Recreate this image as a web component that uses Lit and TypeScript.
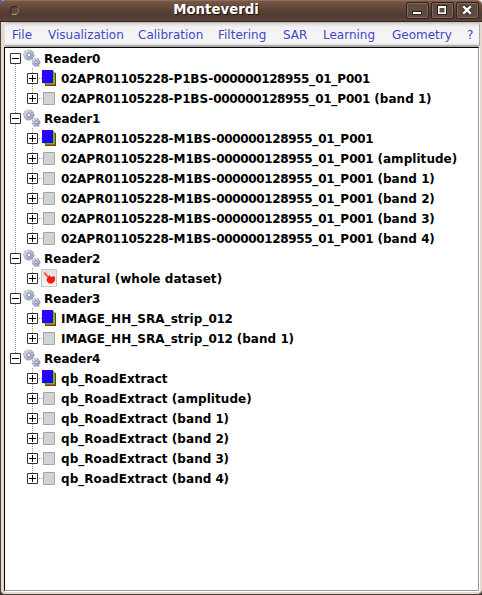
import { LitElement, html, svg, css } from "lit";
import { customElement, property } from "lit/decorators.js";

type Kind = "rgb" | "band" | "view";
interface Leaf { name: string; kind: Kind; }
interface Reader { name: string; items: Leaf[]; }

const product = (name: string, bands: string[]): Leaf[] => [
  { name, kind: "rgb" },
  ...bands.map((b) => ({ name: `${name} (${b})`, kind: "band" as Kind })),
];
const allBands = ["amplitude", "band 1", "band 2", "band 3", "band 4"];

const readers: Reader[] = [
  { name: "Reader0", items: product("02APR01105228-P1BS-000000128955_01_P001", ["band 1"]) },
  { name: "Reader1", items: product("02APR01105228-M1BS-000000128955_01_P001", allBands) },
  { name: "Reader2", items: [{ name: "natural (whole dataset)", kind: "view" }] },
  { name: "Reader3", items: product("IMAGE_HH_SRA_strip_012", ["band 1"]) },
  { name: "Reader4", items: product("qb_RoadExtract", allBands) },
];

// Digits are set slightly tighter than letters.
const tightDigits = (text: string) =>
  text.split(/(\d+)/).map((part) => (/^\d/.test(part) ? html`<span class="num">${part}</span>` : part));

const gear = (cx: number, cy: number, r: number) => svg`
  <circle cx=${cx} cy=${cy} r=${r} fill="none" stroke="#9298ad" stroke-width="1.4" stroke-dasharray="2 .9"/>
  <circle cx=${cx} cy=${cy} r=${r * 0.72} fill="none" stroke="url(#steel)" stroke-width=${r * 0.6}/>
  <circle cx=${cx} cy=${cy} r=${r * 0.38} fill="#fff" stroke="#747b94" stroke-width=".9"/>`;

@customElement("tree-icon")
class TreeIcon extends LitElement {
  @property() kind = "gear";
  static styles = css`:host { display: block; } svg { display: block; overflow: visible; }`;
  render() {
    if (this.kind === "gear")
      return html`<svg width="19" height="20" viewBox="0 0 19 20">
        <defs>
          <linearGradient id="steel" x1="0" y1="0" x2="1" y2="1"><stop offset="0" stop-color="#d0d5ea"/><stop offset="1" stop-color="#969db9"/></linearGradient>
        </defs>
        <ellipse cx="13.6" cy="18" rx="4" ry="1" fill="#000" opacity=".15"/>
        ${gear(5.9, 7, 4.9)}${gear(13.1, 14.3, 3.6)}
      </svg>`;
    if (this.kind === "rgb")
      return html`<svg width="16" height="20" viewBox="0 0 16 20" shape-rendering="crispEdges">
        <path d="M3 5h11v13H3z" fill="#b8200c"/>
        <path d="M11 3h1v1h1v12H2v-1h9z" fill="#3fd012"/>
        <path d="M3 16h10v1H3z" fill="#5f8a10"/>
        <path d="M0 2h11v13H0z" fill="#2a00ff"/>
      </svg>`;
    if (this.kind === "view")
      return html`<svg width="16" height="20" viewBox="1 0 16 20">
        <defs><linearGradient id="p" x1="0" y1="0" x2="0" y2="1"><stop offset="0" stop-color="#e0e0e0"/><stop offset="1" stop-color="#f5f5f5"/></linearGradient></defs>
        <path d="M.5 1.5h15v17H.5z" fill="url(#p)" stroke="#c9c4c4"/>
        <path d="M2.3 5L4.4 4l3.8 4.6-1.4 2z" fill="#e98078"/>
        <path d="M3 5l4.5 4.2" stroke="#ee5448" stroke-width="1.1"/>
        <path d="M5.6 11L7.6 8.6 8.6 7l1.6 2.2 2.2-1.2 1.8 1.6-.4 3.4-2.5 2.6-3.2-.1-2.2-2.2z" fill="#fa1611"/>
      </svg>`;
    return html`<svg width="16" height="20" viewBox="0 0 16 20"><path d="M1.5 4.5h11v12h-11z" fill="#d3d3d3" stroke="#a4a4a4"/></svg>`;
  }
}

@customElement("tree-toggle")
class TreeToggle extends LitElement {
  @property({ type: Boolean }) open = false;
  static styles = css`:host { display: block; } svg { display: block; }`;
  render() {
    return html`<svg width="11" height="11" viewBox="0 0 11 11">
      <path d="M.5 .5h10v10H.5z" fill="#fff" stroke="#333"/>
      <path d=${this.open ? "M2 5.5h7" : "M2 5.5h7M5.5 2v7"} stroke="#000"/>
    </svg>`;
  }
}

@customElement("app-root")
class AppRoot extends LitElement {
  static styles = css`
    :host { display: block; height: 595px; font-family: "DejaVu Sans", sans-serif; font-size: 12px; }
    .window { box-sizing: border-box; width: 482px; height: 595px; display: flex; flex-direction: column; overflow: hidden;
      background: linear-gradient(90deg, #3564c8 2px, #e8e8e8 2px) 0 0 / 100% 6px no-repeat #3b332e; }
    .title { height: 22px; flex: none; box-sizing: border-box; display: grid; grid-template-columns: 88px 1fr 88px; align-items: center;
      border-top: 1px solid #8e6c59; border-bottom: 1px solid #35251e; border-radius: 5px 5px 0 0;
      background: linear-gradient(#76594a, #66493b 30%, #513b31 65%, #59443a); }
    .dot { width: 7px; height: 7px; margin-left: 10px; margin-bottom: 2px; border: 1px solid #2e211b; border-bottom-color: #aa9a91; border-right-color: #8f7f76; border-radius: 50%; background: #65483a; }
    .name { margin-right: 50px; text-align: center; color: #fff; font-weight: bold; font-size: 13.33px; line-height: 16px; text-shadow: 1px 1px 1px #1c120d; padding-bottom: 3px; }
    .buttons { display: flex; gap: 2px; justify-content: flex-end; padding: 0 3px 0 0; }
    .buttons svg { display: block; }
    .frame { flex: 1; display: flex; flex-direction: column; min-height: 0; padding: 0 2px 2px 3px; border: solid #4b4038; border-width: 0 0 1px 1px;
      background: #e4dad2; border-radius: 0 0 5px 5px; }
    .menu { height: 25px; flex: none; box-sizing: border-box; display: grid; grid-template-columns: 36px 90px 80px 65px 40px 69px 75px 1fr; padding-left: 7px;
      border: solid #aaa; border-width: 0 1px 2px 1px; border-left-color: #ddd;
      background: linear-gradient(#b8b8b8, #dedede 2px, #f2f2f2 5px, #f6f6f6 20px, #e6e6e6); color: #4545c4; line-height: 26px; border-radius: 3px; }
    .menu span { white-space: nowrap; }
    .view { flex: 1; min-height: 0; background: #fff; border: solid #000; border-width: 1px 0 0 1px; border-right: 1px solid #999; border-bottom: 1px solid #999; padding-left: 5px;
      margin-right: 1px; box-shadow: 1px 1px 0 #fff; margin-bottom: 1px; }
    .branch { --dots: repeating-linear-gradient(#999 0 1px, transparent 1px 2px); background: var(--dots) 5px 0 / 1px 100% no-repeat; }
    .branch:first-child { background-position: 5px 10px; }
    .branch:last-child { background-size: 1px 10px; }
    .row { height: 20px; display: flex; align-items: center; font-weight: bold; color: #000; white-space: nowrap; }
    .row tree-icon { margin-left: 2px; }
    .row .label { margin-left: 2px; line-height: 20px; padding-top: 2px; }
    .num { letter-spacing: -0.36px; }
    .kids { margin-left: 17px; background: var(--dots) 5px 0 / 1px calc(100% - 10px) no-repeat; }
    .kids .link { width: 5px; height: 1px; background: repeating-linear-gradient(90deg, transparent 0 1px, #999 1px 2px); }
    .kids tree-icon { margin-left: -1px; }
    .kids .label { margin-left: 3px; letter-spacing: 0.05px; }
  `;

  render() {
    const menus = ["File", "Visualization", "Calibration", "Filtering", "SAR", "Learning", "Geometry", "?"];
    const glyphs = [
      svg`<path d="M7 12h8v2H7z" fill="#fff" stroke="#2e211b" stroke-width="2" paint-order="stroke"/>`,
      svg`<path d="M7 6h8v8H7z" fill="none" stroke="#2e211b" stroke-width="2"/><path d="M7 6h8v8H7zM8.5 8v4.5h5V8z" fill="#fff" fill-rule="evenodd"/>`,
      svg`<path d="M7.5 6.5l7 7m0-7l-7 7" stroke="#2e211b" stroke-width="4"/><path d="M7.3 6.3l7.4 7.4m0-7.4l-7.4 7.4" stroke="#fff" stroke-width="2.4"/>`,
    ];
    return html`<div class="window">
      <div class="title">
        <div class="dot"></div>
        <div class="name">Monteverdi</div>
        <div class="buttons">${glyphs.map((g) => html`<svg width="23" height="18" viewBox="0 0 23 18">
          <rect x=".5" y=".5" width="22" height="16" rx="1.5" fill="#614a3e" stroke="#30231d"/>
          <rect x="1.5" y="1.5" width="20" height="14" rx="1" fill="none" stroke="#84695b"/>
          <g transform="translate(0 -2)">${g}</g></svg>`)}</div>
      </div>
      <div class="frame">
        <div class="menu">${menus.map((m) => html`<span>${m}</span>`)}</div>
        <div class="view">${readers.map((r) => html`<div class="branch">
          <div class="row"><tree-toggle open></tree-toggle><tree-icon kind="gear"></tree-icon><span class="label">${r.name}</span></div>
          <div class="kids">${r.items.map((l) => html`<div class="row"><tree-toggle></tree-toggle><div class="link"></div><tree-icon kind=${l.kind}></tree-icon><span class="label">${tightDigits(l.name)}</span></div>`)}</div>
        </div>`)}</div>
      </div>
    </div>`;
  }
}
